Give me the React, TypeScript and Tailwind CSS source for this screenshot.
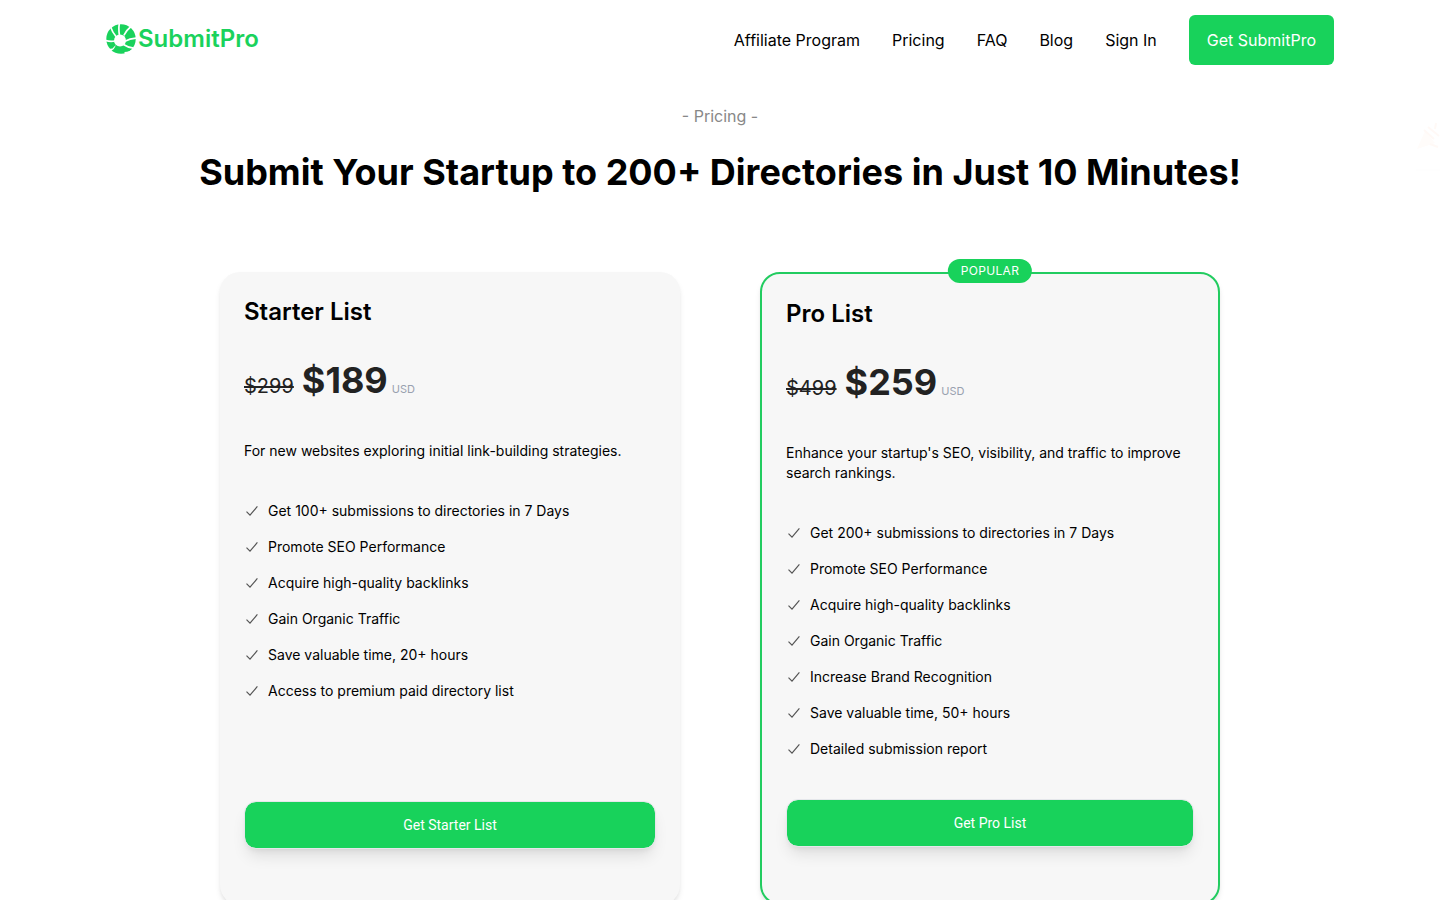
type Plan = {
  name: string;
  oldPrice: string;
  price: string;
  description: string;
  features: string[];
  cta: string;
  popular?: boolean;
};

const NAV_LINKS = ["Affiliate Program", "Pricing", "FAQ", "Blog", "Sign In"];

const PLANS: Plan[] = [
  {
    name: "Starter List",
    oldPrice: "$299",
    price: "$189",
    description: "For new websites exploring initial link-building strategies.",
    features: [
      "Get 100+ submissions to directories in 7 Days",
      "Promote SEO Performance",
      "Acquire high-quality backlinks",
      "Gain Organic Traffic",
      "Save valuable time, 20+ hours",
      "Access to premium paid directory list",
    ],
    cta: "Get Starter List",
  },
  {
    name: "Pro List",
    oldPrice: "$499",
    price: "$259",
    description: "Enhance your startup's SEO, visibility, and traffic to improve search rankings.",
    features: [
      "Get 200+ submissions to directories in 7 Days",
      "Promote SEO Performance",
      "Acquire high-quality backlinks",
      "Gain Organic Traffic",
      "Increase Brand Recognition",
      "Save valuable time, 50+ hours",
      "Detailed submission report",
    ],
    cta: "Get Pro List",
    popular: true,
  },
];

const LogoMark = () => (
  <svg viewBox="0 0 30 30" className="h-[30px] w-[30px]" aria-hidden="true">
    <circle cx="15" cy="15" r="14.7" fill="#1ad25c" />
    <circle cx="14" cy="16.6" r="6" fill="#fff" />
    <g stroke="#fff" strokeWidth="1.7" fill="none">
      <path d="M13.4 -1Q12.4 5 13.4 11" />
      <path d="M4.4 2.5Q6.5 8.5 10 12.5" />
      <path d="M-1 16.4Q4 18 9 17" />
      <path d="M25 2.5Q20 6.5 17.8 11.5" />
      <path d="M31 14Q24 14.5 19 17.2" />
      <path d="M27.5 24.2Q22 23.6 17.5 20.5" />
    </g>
    <path d="M3.5 27.5Q8.5 26 9.8 21L6.5 24.5L2 25Z" fill="#fff" />
    <path d="M19 31L18.4 28Q24 28 27.4 24.2L31 28Z" fill="#fff" />
  </svg>
);

const CheckIcon = () => (
  <svg viewBox="0 0 16 16" className="h-4 w-4 shrink-0" fill="none" stroke="#555" strokeWidth="1.2" aria-hidden="true">
    <path d="M2.5 8.6L6 12.2L13.4 3.4" />
  </svg>
);

// Barely visible decoration that peeks in from the right edge
const PartyPopper = () => (
  <svg viewBox="0 0 24 50" className="absolute top-[122px] right-0 h-[50px] w-6" aria-hidden="true">
    <path d="M1 27L9 9L19 21Z" fill="#fffcfa" />
    <path d="M8 8L18 17M12 5L23 14M20 1L19 7M14 22L22 25" stroke="#fff9f6" strokeWidth="2" />
    <path d="M0 48H24" stroke="#fdfdfd" />
  </svg>
);

const Header = () => (
  <header className="mx-auto flex h-20 w-full max-w-7xl items-center justify-between px-[26px]">
    <a href="#" className="flex items-center gap-0.5 pb-0.5">
      <LogoMark />
      <span className="text-2xl leading-6 font-semibold text-[#1ad25c]">SubmitPro</span>
    </a>
    <nav className="flex items-center gap-8">
      {NAV_LINKS.map((link) => (
        <a key={link} href="#">
          {link}
        </a>
      ))}
      <a href="#pricing" className="rounded-md bg-[#18d25b] px-[18px] py-[13px] text-white">
        Get SubmitPro
      </a>
    </nav>
  </header>
);

const PlanCard = ({ plan }: { plan: Plan }) => (
  <article
    className={`relative flex flex-col rounded-[20px] bg-[#f7f7f7] p-6 shadow-md ${
      plan.popular ? "border-2 border-[#22cc60]" : ""
    }`}
  >
    {plan.popular && (
      <span className="absolute -top-[15px] left-1/2 -translate-x-1/2 rounded-full bg-[#18d25b] px-[13px] py-1 text-xs tracking-wide text-white uppercase">
        Popular
      </span>
    )}
    <h2 className="text-2xl font-semibold">{plan.name}</h2>
    <div className="mt-8 flex h-[41px] items-baseline text-[#222]">
      <span className="text-xl line-through">{plan.oldPrice}</span>
      <span className="ml-2 text-4xl font-bold">{plan.price}</span>
      <span className="ml-1 text-[11px] text-gray-400">USD</span>
    </div>
    <p className="mt-10 text-sm">{plan.description}</p>
    <ul className="mt-10 mb-10 flex flex-col gap-4">
      {plan.features.map((feature) => (
        <li key={feature} className="flex items-center gap-2 text-sm">
          <CheckIcon />
          {feature}
        </li>
      ))}
    </ul>
    <button
      type="button"
      className="mt-auto mb-8 h-12 rounded-xl border border-gray-200 bg-[#18d25b] bg-clip-padding font-[Roboto,sans-serif] text-sm text-white shadow-lg"
    >
      {plan.cta}
    </button>
  </article>
);

const App = () => {
  return (
    <div className="relative min-h-screen overflow-x-hidden bg-white font-[Inter,sans-serif] text-black">
      <Header />
      <main id="pricing" className="px-6 pt-6 pb-20">
        <p className="text-center text-[#888]">- Pricing -</p>
        <h1 className="mt-6 text-center text-4xl font-bold">
          Submit Your Startup to 200+ Directories in Just 10 Minutes!
        </h1>
        <div className="mx-auto mt-20 grid max-w-[1000px] grid-cols-2 gap-20">
          {PLANS.map((plan) => (
            <PlanCard key={plan.name} plan={plan} />
          ))}
        </div>
      </main>
      <PartyPopper />
    </div>
  );
};

export default App;
